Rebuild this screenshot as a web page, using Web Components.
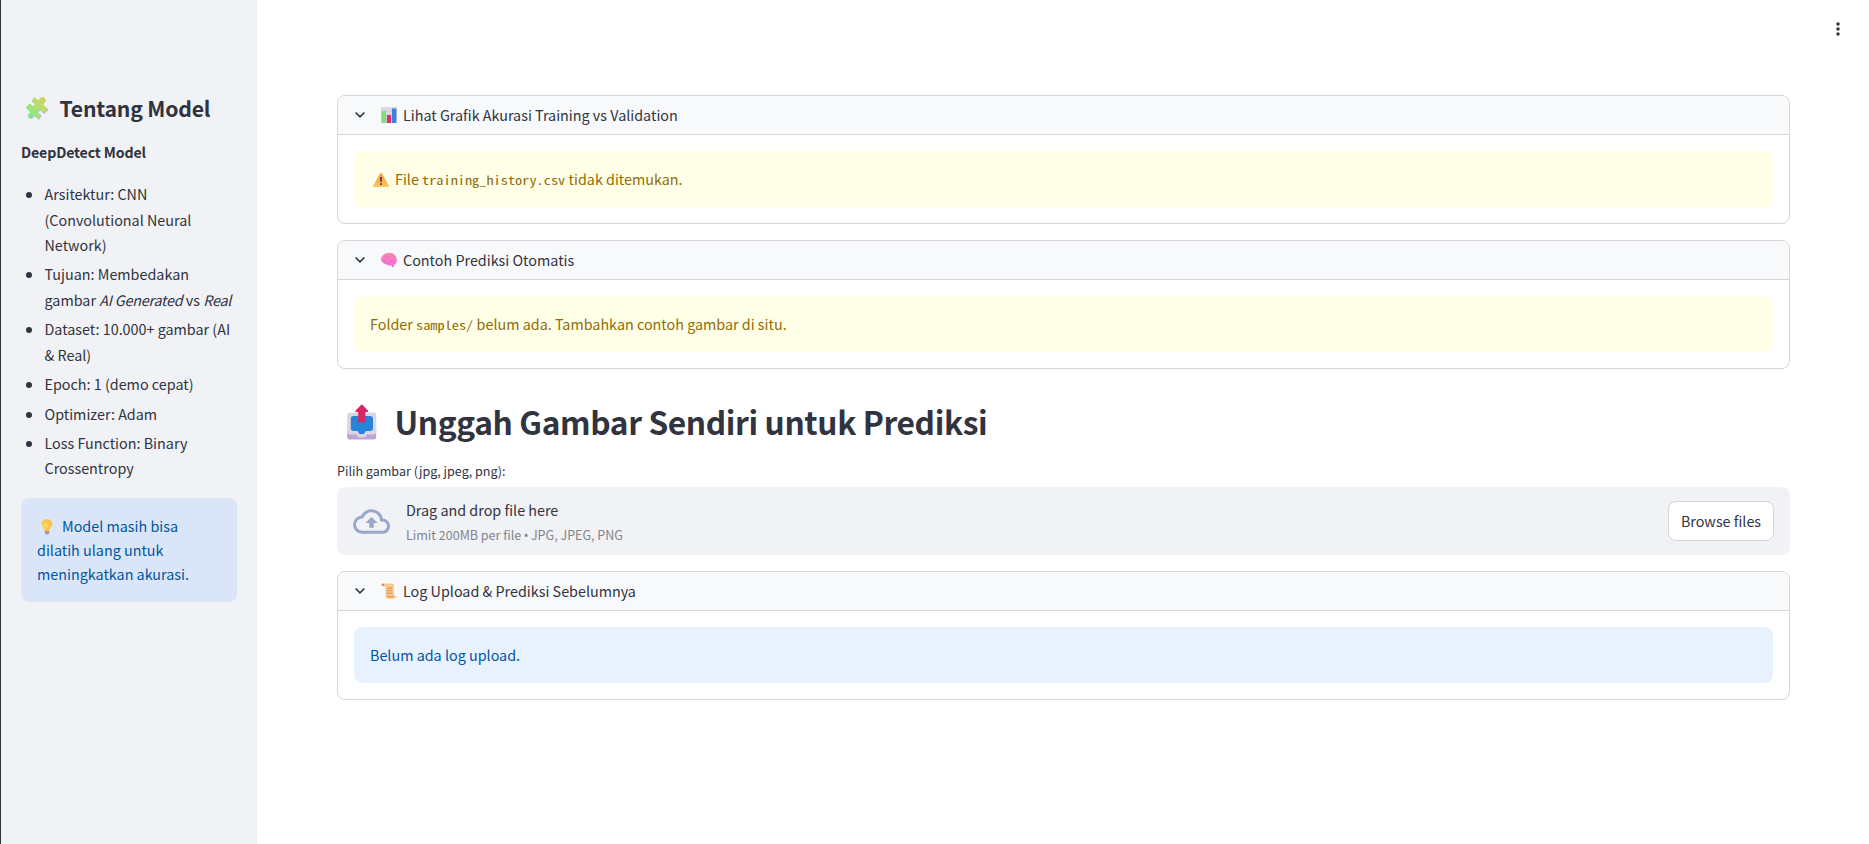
<!DOCTYPE html>
<html lang="id">
<head>
<meta charset="utf-8">
<title>DeepDetect</title>
<style>
  html, body { margin: 0; height: 100%; }
  body {
    font-family: "Noto Sans CJK SC", "Noto Sans", sans-serif;
    font-size: 14.35px; line-height: 24px; color: #31333f; background: #fff;
    overflow: hidden;
  }
  li { position: relative; }
  li::before { content: ""; position: absolute; left: -19px; top: 11px; width: 6px; height: 6px; border-radius: 50%; background: #31333f; }
  em { letter-spacing: -.2px; }
</style>
</head>
<body>
<deep-app>
  <side-panel slot="side">
    <h2 slot="title"><emoji-icon name="puzzle" style="--s:24px"></emoji-icon><span>Tentang Model</span></h2>
    <strong>DeepDetect Model</strong>
    <ul>
      <li>Arsitektur: CNN<br>(Convolutional Neural<br>Network)</li>
      <li>Tujuan: Membedakan<br>gambar <em>AI Generated</em> vs <em>Real</em></li>
      <li>Dataset: 10.000+ gambar (AI<br>&amp; Real)</li>
      <li>Epoch: 1 (demo cepat)</li>
      <li>Optimizer: Adam</li>
      <li>Loss Function: Binary<br>Crossentropy</li>
    </ul>
    <alert-box kind="info"><emoji-icon name="bulb" style="--s:16px; margin:0 7px 0 2px"></emoji-icon>Model masih bisa<br>dilatih ulang untuk<br>meningkatkan akurasi.</alert-box>
  </side-panel>
  <expander-card>
    <emoji-icon slot="icon" name="chart" style="--s:16px"></emoji-icon>
    <span slot="label">Lihat Grafik Akurasi Training vs Validation</span>
    <alert-box kind="warning"><emoji-icon name="warn" style="--s:16px; margin:0 6px 0 3px"></emoji-icon>File <code-text>training_history.csv</code-text> tidak ditemukan.</alert-box>
  </expander-card>
  <expander-card>
    <emoji-icon slot="icon" name="brain" style="--s:16px"></emoji-icon>
    <span slot="label">Contoh Prediksi Otomatis</span>
    <alert-box kind="warning">Folder <code-text>samples/</code-text> belum ada. Tambahkan contoh gambar di situ.</alert-box>
  </expander-card>
  <page-heading><emoji-icon name="outbox" style="--s:36px"></emoji-icon><span slot="text">Unggah Gambar Sendiri untuk Prediksi</span></page-heading>
  <file-uploader label="Pilih gambar (jpg, jpeg, png):" limit="Limit 200MB per file" types="JPG, JPEG, PNG"></file-uploader>
  <expander-card>
    <emoji-icon slot="icon" name="scroll" style="--s:16px"></emoji-icon>
    <span slot="label">Log Upload &amp; Prediksi Sebelumnya</span>
    <alert-box kind="info">Belum ada log upload.</alert-box>
  </expander-card>
</deep-app>

<script>
const define = (name, html, setup) => customElements.define(name, class extends HTMLElement {
  constructor() {
    super();
    this.attachShadow({ mode: 'open' });
    const t = document.createElement('template');
    t.innerHTML = html;
    this.shadowRoot.append(t.content.cloneNode(true));
  }
  connectedCallback() { if (setup) setup(this, this.shadowRoot); }
});

const PUZZLE = 'M9.3.9 12.2 3.6C13.2 4.5 14.3 3.9 14.5 2.9 14.9 1.100 16.900.4 18.600 1.300 20.700 2.600 20.500 5.400 18.500 6.300 17.500 6.800 17.400 7.700 18 8.400L22.900 13 19.300 16.400C18.300 17.200 17.300 16.600 16.900 15.600 16.400 14 14.500 13.400 13.300 14.500 12.100 15.800 12.800 17.300 14.400 17.700 15.500 18 16.100 18.600 15.500 19.400L13.200 22.900 9.600 19.700C8.800 19 8 19.500 7.700 20.500 7 22.200 4.900 22.500 3.600 21.200 2.300 19.800 2.700 17.800 4.300 17.200 5.200 16.900 5.300 16 4.800 15.400L.7 11.200 3.800 8.200C4.800 7.300 5.700 7.800 6 8.700 6.500 10 8.300 10.300 9.200 9.200 10.200 8 9.600 6.500 8.200 6.100 7 5.800 6.500 5 7.200 3.900z';

const ICONS = {
  puzzle: `<svg viewBox="0 0 24 24"><defs><linearGradient id="p" x1="1" y1="0" x2="0" y2="1"><stop offset="0" stop-color="#d9cf4e"/><stop offset=".45" stop-color="#b5df70"/><stop offset="1" stop-color="#6cee93"/></linearGradient></defs><path transform="translate(.6 .8)" fill="#c5a7d8" d="${PUZZLE}"/><path fill="url(#p)" d="${PUZZLE}"/></svg>`,
  bulb: `<svg viewBox="0 0 16 16"><defs><radialGradient id="b" cx=".4" cy=".65" r=".7"><stop offset="0" stop-color="#ffe268"/><stop offset="1" stop-color="#fdb63c"/></radialGradient></defs><path fill="#b9a3bd" d="M5.700 11.500h4.600L10 15q-2 1.300-4 0z"/><path fill="#8d7591" d="M5.900 12.800h4.200l-.1.900H6z"/><path fill="url(#b)" d="M8 .2c3.100 0 5.300 2.200 5.300 5 0 2.700-2.300 3.600-2.800 6.100-.1.600-.4.900-.9.900H6.400c-.5 0-.8-.3-.9-.9C5 8.800 2.700 7.900 2.700 5.200 2.700 2.400 4.900.2 8 .2z"/><path fill="none" stroke="#f59a2f" stroke-width=".6" d="M6.500 7.500 7.400 12M9.500 7.500 8.600 12"/></svg>`,
  chart: `<svg viewBox="0 0 16 16"><rect width="16" height="16" rx="1" fill="#ddd6e4"/><path stroke="#c4bccf" stroke-width=".6" d="M0 4h16M0 8h16M0 12h16"/><rect x=".6" y="4" width="4.400" height="12" fill="#7be276"/><rect x="5.900" y="8" width="4.200" height="8" fill="#e02c6e"/><rect x="11" y="1.500" width="4.400" height="14.500" fill="#3985dc"/></svg>`,
  warn: `<svg viewBox="0 0 16 16"><defs><linearGradient id="w" x2="0" y2="1"><stop stop-color="#f79345"/><stop offset="1" stop-color="#ffc65a"/></linearGradient></defs><path fill="url(#w)" d="M7.100 1.600q.9-1.300 1.800 0l7 12.100q.5 1.300-.9 1.300H1q-1.400 0-.9-1.300z"/><path fill="#50404f" d="M7 5h2l-.3 5.300H7.300zM7.100 11.300h1.800v1.700H7.100z"/></svg>`,
  brain: `<svg viewBox="0 0 16 16"><defs><linearGradient id="r" x2="0" y2="1"><stop stop-color="#f88fac"/><stop offset="1" stop-color="#ff63ee"/></linearGradient></defs><path fill="url(#r)" d="M2.300 3C3.500 1.400 6 .7 8.100.8c3-.1 5.700 1.400 6.700 3.700 1.300 1.900 1.500 4.700.4 6.400-.4.900-1.200 1.400-1.900 1.500l-.4 2.400q-.8.800-1.700.1l-.8-1.700c-1.600.4-3.300.2-4.400-.8-1.800.3-3.200-.5-3.900-1.800C.3 9.800-.3 7.800.2 6.200.3 4.900 1.100 3.800 2.300 3z"/><path fill="none" stroke="#dd58b8" stroke-width=".55" d="M3 5.200q1.500-2 3-1.200M6.300 6.300q1.500-2 3.500-.6M10.500 3q2.700.3 3.100 3M2.300 9q2 .5 3-1.300M6 10.300q3 1 4-1.500 2.500.3 3.500-1"/></svg>`,
  outbox: `<svg viewBox="0 0 36 36"><defs><linearGradient id="o" x1="0" x2="1"><stop stop-color="#e8243e"/><stop offset="1" stop-color="#c42a8b"/></linearGradient></defs><path fill="#bea3d6" d="M3.200 24h29v9q0 2.500-2.500 2.500h-24q-2.500 0-2.500-2.500z"/><path fill="#dcd6e2" d="M6 8.500h23.500q2.700 0 2.700 2.700v16.500q0 2.700-2.700 2.700h-6.200q-1 0-1.100 1-.5 2-2.700 2h-3.600q-2.200 0-2.700-2-.1-1-1.100-1H5.900q-2.700 0-2.700-2.700V11.200q0-2.700 2.800-2.700z"/><path fill="#2784d8" d="M9.500 12H26q3 0 3 3v9.300q0 2.700-2.700 2.700h-3.600q-2 0-2 1.500 0 1.500-1.600 1.500h-2.900q-1.600 0-1.600-1.500 0-1.500-2-1.500H9.500q-2.700 0-2.700-2.700V15q0-3 2.700-3z"/><path fill="url(#o)" d="M17 1q.8-1 1.600 0l5.400 5.500q1 1.500-.7 1.500h-1.900v9.500q0 .7-.7.700h-5.800q-.7 0-.7-.7V8h-1.900q-1.700 0-.7-1.500z"/></svg>`,
  scroll: `<svg viewBox="0 0 16 17"><path fill="#f7ca8a" d="M1.300.5h10.200q1.700.2 1.700 2v11H4.500V4.500L3 3.500z"/><path fill="#d48d6c" d="M.2 1.500Q.4.300 1.700.5q1.600.3 1.300 2.700H1Q0 2.800.2 1.500z"/><path fill="#ffc77c" d="M4.500 13.500h11.300q.1 3-2.300 3.200H7Q4.400 16.600 4.500 13.500z"/><path fill="#e39c71" d="M4.500 13.500h9q-.6 2-2 2-6 .2-7-2z"/><path stroke="#cb7d62" stroke-width=".9" d="M5.500 5.500h6M5.500 8.200h6M5.500 10.800h6"/></svg>`
};

define('emoji-icon', `<style>
  :host { display: inline-block; width: var(--s); height: var(--s); vertical-align: -3px; flex: none; line-height: 0; }
  svg { width: 100%; height: 100%; display: block; overflow: visible; }
</style>`, (el, root) => {
  if (root.querySelector('svg')) return;
  const t = document.createElement('template');
  t.innerHTML = ICONS[el.getAttribute('name')];
  root.append(t.content);
});

define('deep-app', `<style>
  :host { display: flex; height: 844px; box-sizing: border-box; border-left: 1px solid #2f303a; }
  main { flex: 1; display: flex; flex-direction: column; }
  header { height: 58px; box-sizing: border-box; padding: 18px 20px 0 0; display: flex; justify-content: flex-end; }
  header svg { width: 22px; height: 22px; }
  section { padding: 37px 79px 0 80px; display: flex; flex-direction: column; gap: 16px; }
</style>
<slot name="side"></slot>
<main>
  <header><svg viewBox="0 0 22 22" fill="#31333f"><circle cx="11" cy="6" r="1.750"/><circle cx="11" cy="11" r="1.750"/><circle cx="11" cy="16" r="1.750"/></svg></header>
  <section><slot></slot></section>
</main>`);

define('side-panel', `<style>
  :host { display: block; width: 256px; box-sizing: border-box; padding: 91px 20px 0; background: #f0f2f6; }
  ::slotted(h2) { display: flex; align-items: center; gap: 10.500px; margin: 0 0 15px 4px; height: 34px; font-size: 21.200px; letter-spacing: -.2px; font-weight: 700; line-height: 34px; white-space: nowrap; }
  ::slotted(strong) { display: block; line-height: 24px; font-size: 14.200px; letter-spacing: -.15px; }
  ::slotted(ul) { list-style: none; margin: 17px 0 17px; padding: 0 0 0 23.500px; line-height: 25.600px; white-space: nowrap; display: flex; flex-direction: column; gap: 3.700px; }
</style><slot name="title"></slot><slot></slot>`);

define('alert-box', `<style>
  :host { display: block; padding: 16px; border-radius: 8px; line-height: 24px; white-space: nowrap; }
  :host([kind="info"]) { background: rgba(28,131,255,.1); color: #0054a3; }
  :host([kind="warning"]) { background: #ffffe7; color: #926c05; }
</style><slot></slot>`);

// The monospace face is half-width; stretch it to a 0.6em advance and reserve the extra room.
define('code-text', `<style>
  :host { display: inline-block; font-family: "Noto Sans Mono CJK SC", "Liberation Mono", monospace; font-size: 12.200px; line-height: 1; transform: scaleX(1.175); transform-origin: 0 50%; }
</style><slot></slot>`, el => { el.style.marginRight = (el.textContent.length * 1.068).toFixed(2) + 'px'; });

define('expander-card', `<style>
  :host { display: block; border: 1px solid #d6d6d9; border-radius: 8px; overflow: hidden; }
  .head { display: flex; align-items: center; height: 38px; padding-left: 16px; background: #f8f9fb; border-bottom: 1px solid #d6d6d9; white-space: nowrap; }
  .chev { width: 12px; height: 12px; margin-right: 15px; }
  slot[name="label"] { display: block; margin-left: 6px; }
  .body { padding: 16px; }
  ::slotted(alert-box) { height: 24px; }
</style>
<div class="head"><svg class="chev" viewBox="0 0 12 12" fill="none" stroke="#31333f" stroke-width="1.700"><path d="M1.600 3.500 6 7.800l4.400-4.300"/></svg><slot name="icon"></slot><slot name="label"></slot></div>
<div class="body"><slot></slot></div>`);

define('page-heading', `<style>
  :host { display: flex; align-items: center; gap: 14.500px; height: 74px; padding-left: 7px; font-size: 31.700px; letter-spacing: -.37px; font-weight: 700; line-height: 44px; white-space: nowrap; }
  .t { padding-bottom: 3px; }
</style><slot></slot><div class="t"><slot name="text"></slot></div>`);

define('file-uploader', `<style>
  :host { display: block; }
  .label { font-size: 12.550px; line-height: 21px; height: 28px; box-sizing: border-box; padding-top: 1px; margin-top: -16px; }
  .zone { display: flex; align-items: center; height: 68px; box-sizing: border-box; padding: 0 16px; border-radius: 8px; background: #f0f2f6; }
  svg { width: 37px; height: 37px; margin-right: 16px; }
  .txt { flex: 1; padding-top: 2px; }
  .title { line-height: 24px; }
  .hint { font-size: 12.520px; line-height: 22px; padding-top: 2px; color: #83848c; }
  .dot { font-family: "Noto Sans", sans-serif; line-height: 1; margin: 0 -.3px; }
  button { font: inherit; color: inherit; box-sizing: border-box; width: 106px; height: 40px; padding: 0; border: 1px solid #d6d6d9; border-radius: 8px; background: #fff; white-space: nowrap; }
</style>
<div class="label"></div>
<div class="zone">
  <svg viewBox="0 0 24 24" fill="#98a7c8"><path d="M19.350 10.040A7.490 7.490 0 0 0 12 4C9.110 4 6.600 5.640 5.350 8.040A5.994 5.994 0 0 0 0 14c0 3.310 2.690 6 6 6h13c2.760 0 5-2.240 5-5 0-2.640-2.050-4.780-4.650-4.960zM19 18H6c-2.210 0-4-1.790-4-4 0-2.050 1.530-3.760 3.560-3.970l1.070-.11.500-.95A5.469 5.469 0 0 1 12 6c2.620 0 4.880 1.860 5.390 4.430l.3 1.500 1.530.11A2.980 2.980 0 0 1 22 15c0 1.650-1.350 3-3 3zM8 13h2.550v3h2.900v-3H16l-4-4z"/></svg>
  <div class="txt"><div class="title">Drag and drop file here</div><div class="hint"><span class="limit"></span> <span class="dot">•</span> <span class="types"></span></div></div>
  <button>Browse files</button>
</div>`, (el, root) => {
  root.querySelector('.label').textContent = el.getAttribute('label');
  root.querySelector('.limit').textContent = el.getAttribute('limit');
  root.querySelector('.types').textContent = el.getAttribute('types');
});
</script>
</body>
</html>
